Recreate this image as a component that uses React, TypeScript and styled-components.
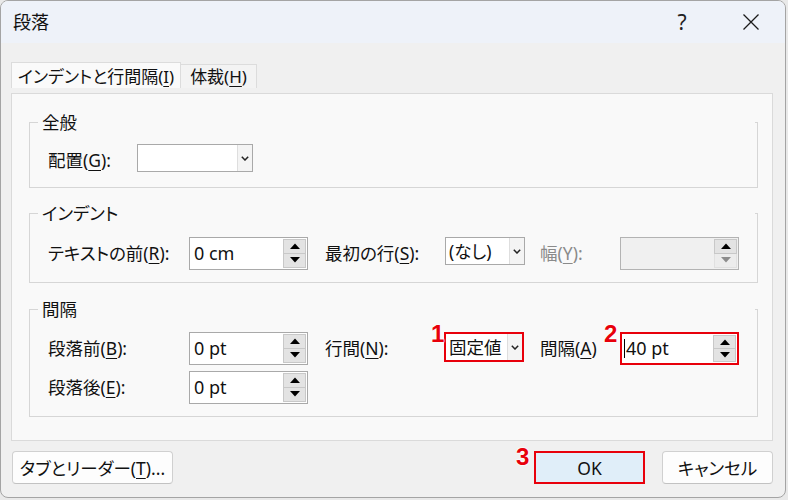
import React from "react";
import styled, { createGlobalStyle, css } from "styled-components";

const GlobalStyle = createGlobalStyle`
  html, body {
    margin: 0;
    padding: 0;
    background: #e9e9e9;
  }
  body {
    font-family: "Noto Sans", "Noto Sans CJK JP", sans-serif;
    font-feature-settings: "palt";
    color: #111;
  }
`;

const Window = styled.div`
  width: 786px;
  height: 498px;
  box-sizing: border-box;
  border: 1px solid #a4a4a4;
  border-radius: 8px;
  overflow: hidden;
  background: #f0f0f0;
  display: flex;
  flex-direction: column;
`;

const TitleBar = styled.div`
  height: 42px;
  flex-shrink: 0;
  background: #eef2f9;
  display: flex;
  align-items: center;
  padding-left: 12px;
`;

const Title = styled.div`
  font-size: 18px;
  line-height: 20px;
  flex: 1;
`;

const TitleButton = styled.div<{ $w: number }>`
  width: ${(p) => p.$w}px;
  height: 42px;
  display: flex;
  align-items: center;
  justify-content: center;
  font-family: "Noto Sans", sans-serif;
  font-size: 21px;
  color: #222;
`;

const Body = styled.div`
  flex: 1;
  display: flex;
  flex-direction: column;
  padding: 19px 12px 0 10px;
`;

const Tabs = styled.div`
  display: flex;
  align-items: flex-end;
  height: 26px;
  margin-bottom: 5px;
`;

const Tab = styled.div<{ $active?: boolean }>`
  box-sizing: border-box;
  height: ${(p) => (p.$active ? 26 : 24)}px;
  padding: 0 ${(p) => (p.$active ? 6 : 9)}px;
  border: 1px solid #dcdcdc;
  border-bottom: none;
  background: ${(p) => (p.$active ? "#fafafa" : "#f3f3f3")};
  font-size: 17px;
  line-height: ${(p) => (p.$active ? 28 : 24)}px;
  white-space: nowrap;
  & + & {
    border-left: none;
  }
`;

const Panel = styled.div`
  height: 348px;
  box-sizing: border-box;
  border: 1px solid #dadada;
  background: #f9f9f9;
  padding: 28px 14px 0 17px;
  display: flex;
  flex-direction: column;
`;

const Group = styled.div<{ $h: number; $gap: number }>`
  position: relative;
  height: ${(p) => p.$h}px;
  box-sizing: border-box;
  margin-top: ${(p) => p.$gap}px;
  border: 1px solid #d6d6d6;
  border-top: none;
  display: flex;
  flex-direction: column;
  &:first-child {
    margin-top: 0;
  }
  &::before,
  &::after {
    content: "";
    position: absolute;
    top: 0;
    height: 1px;
    background: #d6d6d6;
  }
  &::before {
    left: -1px;
    width: 9px;
  }
  &::after {
    right: -1px;
    width: 3px;
  }
`;

const Legend = styled.div`
  margin: -10px 0 0 12px;
  height: 20px;
  font-size: 17.5px;
  line-height: 20px;
`;

const Row = styled.div<{ $top: number }>`
  display: flex;
  align-items: center;
  margin-top: ${(p) => p.$top}px;
  padding-left: 18px;
  height: 32px;
`;

const Label = styled.div<{ $w: number; $muted?: boolean }>`
  width: ${(p) => p.$w}px;
  flex-shrink: 0;
  font-size: 17.5px;
  line-height: 20px;
  white-space: nowrap;
  color: ${(p) => (p.$muted ? "#8a8a8a" : "#111")};
`;

const Gap = styled.div<{ $w: number }>`
  width: ${(p) => p.$w}px;
  flex-shrink: 0;
`;

const Key = styled.span`
  text-decoration: underline;
  text-underline-offset: 3px;
  text-decoration-thickness: 1px;
`;

const redBox = css`
  border: 2px solid #e8000b;
`;

const Select = styled.div<{ $w: number; $mark?: boolean }>`
  position: relative;
  box-sizing: border-box;
  width: ${(p) => p.$w}px;
  height: ${(p) => (p.$mark ? 30 : 28)}px;
  align-self: flex-start;
  flex-shrink: 0;
  border: 1px solid #a9a9a9;
  ${(p) => p.$mark && redBox}
  background: #fff;
  display: flex;
  align-items: stretch;
`;

const SelectText = styled.div`
  flex: 1;
  padding-left: 3px;
  font-size: 17.5px;
  line-height: 26px;
  white-space: nowrap;
`;

const SelectArrow = styled.div`
  width: 14px;
  border-left: 1px solid #dedede;
  background: #f4f4f4;
  display: flex;
  align-items: center;
  justify-content: center;
`;

const Spin = styled.div<{ $disabled?: boolean; $mark?: boolean }>`
  position: relative;
  box-sizing: border-box;
  width: 119px;
  height: 33px;
  flex-shrink: 0;
  border: 1px solid ${(p) => (p.$disabled ? "#b3b3b3" : "#a9a9a9")};
  ${(p) => p.$mark && redBox}
  background: ${(p) => (p.$disabled ? "#f0f0f0" : "#fff")};
  display: flex;
  align-items: center;
  padding: 1px;
`;

const SpinValue = styled.div`
  flex: 1;
  display: flex;
  align-items: center;
  padding-left: 3px;
  font-family: "Noto Sans", sans-serif;
  font-size: 18px;
  line-height: 22px;
`;

const Caret = styled.span`
  width: 1px;
  height: 19px;
  background: #000;
  margin-left: -2px;
  margin-right: 1px;
`;

const SpinButtons = styled.div`
  width: 23px;
  height: 100%;
  display: flex;
  flex-direction: column;
`;

const SpinButton = styled.div<{ $faded?: boolean }>`
  flex: 1;
  box-sizing: border-box;
  border: 1px solid ${(p) => (p.$faded ? "#e0e0e0" : "#c8c8c8")};
  background: ${(p) => (p.$faded ? "#ececec" : "#e3e3e3")};
  display: flex;
  align-items: center;
  justify-content: center;
  & + & {
    border-top: none;
  }
`;

const Badge = styled.span<{ $left: number; $top: number }>`
  position: absolute;
  left: ${(p) => p.$left}px;
  top: ${(p) => p.$top}px;
  font-family: "Liberation Sans", Arial, sans-serif;
  font-weight: 700;
  font-size: 24px;
  line-height: 24px;
  color: #e8000b;
  text-shadow: 0 0 2px #fff, 0 0 2px #fff, 0 0 2px #fff;
`;

const Footer = styled.div`
  display: flex;
  align-items: center;
  margin-top: 10px;
  padding-left: 1px;
`;

const Button = styled.div<{ $w: number; $primary?: boolean }>`
  position: relative;
  box-sizing: border-box;
  width: ${(p) => p.$w}px;
  height: 33px;
  border: 1px solid #d0d0d0;
  border-bottom-color: #c2c2c2;
  border-radius: 4px;
  background: #fdfdfd;
  display: flex;
  align-items: center;
  justify-content: center;
  font-size: 17.5px;
  white-space: nowrap;
  ${(p) =>
    p.$primary &&
    css`
      background: #e0eef9;
      border: 2px solid #e8000b;
      border-radius: 0;
    `}
`;

const Spacer = styled.div`
  flex: 1;
`;

const Triangle = ({ down, color = "#000" }: { down?: boolean; color?: string }) => (
  <svg width="10" height="6" viewBox="0 0 10 6">
    <path d={down ? "M0 0 H10 L5 5.5 Z" : "M0 6 H10 L5 0.5 Z"} fill={color} />
  </svg>
);

const Chevron = () => (
  <svg width="8" height="5" viewBox="0 0 8 5">
    <path d="M0.8 0.8 L4 4 L7.2 0.8" fill="none" stroke="#222" strokeWidth="1.5" />
  </svg>
);

const SpinBox = ({
  value,
  disabled,
  mark,
  caret,
  badge,
}: {
  value?: string;
  disabled?: boolean;
  mark?: boolean;
  caret?: boolean;
  badge?: string;
}) => (
  <Spin $disabled={disabled} $mark={mark}>
    {badge && (
      <Badge $left={-18} $top={-12}>
        {badge}
      </Badge>
    )}
    <SpinValue>
      {caret && <Caret />}
      {value}
    </SpinValue>
    <SpinButtons>
      <SpinButton>
        <Triangle />
      </SpinButton>
      <SpinButton $faded={disabled}>
        <Triangle down color={disabled ? "#8c8c8c" : "#000"} />
      </SpinButton>
    </SpinButtons>
  </Spin>
);

const Dropdown = ({
  value,
  width,
  mark,
  badge,
}: {
  value: string;
  width: number;
  mark?: boolean;
  badge?: string;
}) => (
  <Select $w={width} $mark={mark}>
    {badge && (
      <Badge $left={-15} $top={-12}>
        {badge}
      </Badge>
    )}
    <SelectText>{value}</SelectText>
    <SelectArrow>
      <Chevron />
    </SelectArrow>
  </Select>
);

const App: React.FC = () => {
  return (
    <>
      <GlobalStyle />
      <Window>
        <TitleBar>
          <Title>段落</Title>
          <TitleButton $w={46}>?</TitleButton>
          <TitleButton $w={23} />
          <TitleButton $w={46}>
            <svg width="16" height="16" viewBox="0 0 16 16">
              <path d="M0.5 0.5 L15.5 15.5 M15.5 0.5 L0.5 15.5" stroke="#1a1a1a" strokeWidth="1.3" />
            </svg>
          </TitleButton>
          <TitleButton $w={11} />
        </TitleBar>
        <Body>
          <Tabs>
            <Tab $active>
              インデントと行間隔(<Key>I</Key>)
            </Tab>
            <Tab>
              体裁(<Key>H</Key>)
            </Tab>
          </Tabs>
          <Panel>
            <Group $h={66} $gap={0}>
              <Legend>全般</Legend>
              <Row $top={12}>
                <Label $w={89}>
                  配置(<Key>G</Key>):
                </Label>
                <Dropdown value="" width={116} />
              </Row>
            </Group>

            <Group $h={70} $gap={25}>
              <Legend>インデント</Legend>
              <Row $top={14}>
                <Label $w={141}>
                  テキストの前(<Key>R</Key>):
                </Label>
                <SpinBox value="0 cm" />
                <Gap $w={17} />
                <Label $w={120}>
                  最初の行(<Key>S</Key>):
                </Label>
                <Dropdown value="(なし)" width={80} />
                <Gap $w={15} />
                <Label $w={80} $muted>
                  幅(<Key>Y</Key>):
                </Label>
                <SpinBox disabled />
              </Row>
            </Group>

            <Group $h={108} $gap={26}>
              <Legend>間隔</Legend>
              <Row $top={13}>
                <Label $w={141}>
                  段落前(<Key>B</Key>):
                </Label>
                <SpinBox value="0 pt" />
                <Gap $w={17} />
                <Label $w={119}>
                  行間(<Key>N</Key>):
                </Label>
                <Dropdown value="固定値" width={80} mark badge="1" />
                <Gap $w={16} />
                <Label $w={80}>
                  間隔(<Key>A</Key>)
                </Label>
                <SpinBox value="40 pt" mark caret badge="2" />
              </Row>
              <Row $top={7}>
                <Label $w={141}>
                  段落後(<Key>E</Key>):
                </Label>
                <SpinBox value="0 pt" />
              </Row>
            </Group>
          </Panel>
          <Footer>
            <Button $w={161}>
              タブとリーダー(<Key>T</Key>)...
            </Button>
            <Spacer />
            <Button $w={111} $primary>
              <Badge $left={-20} $top={-8}>
                3
              </Badge>
              OK
            </Button>
            <Gap $w={17} />
            <Button $w={111}>キャンセル</Button>
          </Footer>
        </Body>
      </Window>
    </>
  );
};

export default App;
